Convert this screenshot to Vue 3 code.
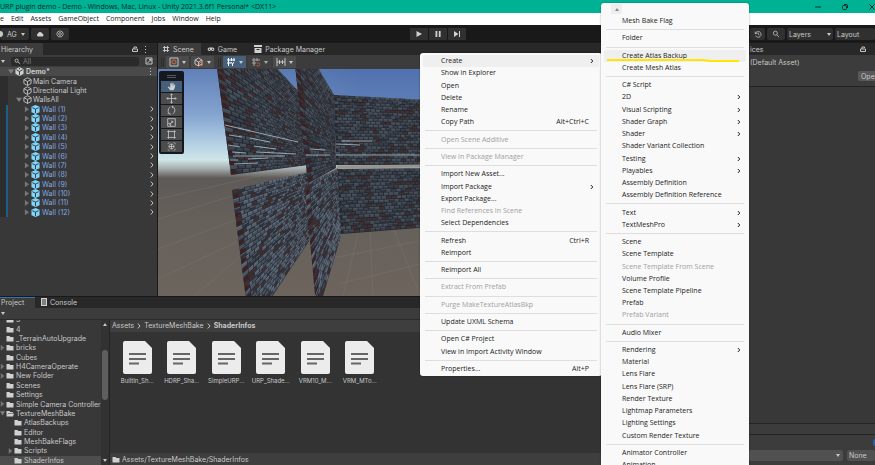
<script setup>
const menus = ['e', 'Edit', 'Assets', 'GameObject', 'Component', 'Jobs', 'Window', 'Help']

const hierarchy = [
  { name: 'Demo*', kind: 'scene', depth: 0, open: true },
  { name: 'Main Camera', kind: 'object', depth: 1 },
  { name: 'Directional Light', kind: 'object', depth: 1 },
  { name: 'WallsAll', kind: 'object', depth: 1, open: true },
  ...Array.from({ length: 12 }, (_, i) => ({ name: `Wall (${i + 1})`, kind: 'prefab', depth: 2, closed: true })),
]

const folders = [
  { name: '3', depth: 0 },
  { name: '4', depth: 0 },
  { name: '_TerrainAutoUpgrade', depth: 0 },
  { name: 'bricks', depth: 0, closed: true },
  { name: 'Cubes', depth: 0 },
  { name: 'H4CameraOperate', depth: 0, closed: true },
  { name: 'New Folder', depth: 0, closed: true },
  { name: 'Scenes', depth: 0 },
  { name: 'Settings', depth: 0 },
  { name: 'Simple Camera Controller', depth: 0, closed: true },
  { name: 'TextureMeshBake', depth: 0, open: true },
  { name: 'AtlasBackups', depth: 1 },
  { name: 'Editor', depth: 1 },
  { name: 'MeshBakeFlags', depth: 1 },
  { name: 'Scripts', depth: 1, closed: true },
  { name: 'ShaderInfos', depth: 1, selected: true },
]

const assets = ['BuiltIn_Sh...', 'HDRP_Sha...', 'SimpleURP...', 'URP_Shade...', 'VRM10_M...', 'VRM_MTo...']

const sep = { sep: true }
const item = (label, extra = {}) => ({ label, ...extra })
const off = { off: true }
const sub = { sub: true }

const contextMenu = [
  item('Create', { sub: true, hot: true }), item('Show in Explorer'), item('Open'), item('Delete'), item('Rename'),
  item('Copy Path', { key: 'Alt+Ctrl+C' }), sep,
  item('Open Scene Additive', off), sep,
  item('View in Package Manager', off), sep,
  item('Import New Asset...'), item('Import Package', sub), item('Export Package...'),
  item('Find References In Scene', off), item('Select Dependencies'), sep,
  item('Refresh', { key: 'Ctrl+R' }), item('Reimport'), sep,
  item('Reimport All'), sep,
  item('Extract From Prefab', off), sep,
  item('Purge MakeTextureAtlasBkp', off), sep,
  item('Update UXML Schema'), sep,
  item('Open C# Project'), item('View in Import Activity Window'), sep,
  item('Properties...', { key: 'Alt+P' }),
]

const createMenu = [
  item('Mesh Bake Flag'), sep,
  item('Folder'), sep,
  item('Create Atlas Backup', { hot: true }), item('Create Mesh Atlas'), sep,
  item('C# Script'), item('2D', sub), item('Visual Scripting', sub), item('Shader Graph', sub), item('Shader', sub),
  item('Shader Variant Collection'), item('Testing', sub), item('Playables', sub),
  item('Assembly Definition'), item('Assembly Definition Reference'), sep,
  item('Text', sub), item('TextMeshPro', sub), sep,
  item('Scene'), item('Scene Template'), item('Scene Template From Scene', off), item('Volume Profile'),
  item('Scene Template Pipeline'), item('Prefab'), item('Prefab Variant', off), sep,
  item('Audio Mixer'), sep,
  item('Rendering', sub), item('Material'), item('Lens Flare'), item('Lens Flare (SRP)'), item('Render Texture'),
  item('Lightmap Parameters'), item('Lighting Settings'), item('Custom Render Texture'), sep,
  item('Animator Controller'), item('Animation'),
]

// Brick walls: each is a quad (top-left, top-right, bottom-right, bottom-left)
// divided in perspective, with bricks grouped into one path per tone.
const walls = [
  { q: [[176, 26], [400, 38], [400, 96], [178, 96]], rows: 22, cols: 50, tone: 0, end: 0 },
  { q: [[178, 100], [400, 98], [400, 148], [183, 165]], rows: 18, cols: 50, tone: 0, end: 0 },
  { q: [[49, -77], [150, 33], [150, 96], [73, 106]], rows: 38, cols: 24, tone: 0, end: 0.03 },
  { q: [[74, 121], [151, 103], [151, 172], [92, 261]], rows: 30, cols: 22, tone: 1, end: 0.04 },
  { q: [[132, -49], [176, 26], [178, 99], [150, 114]], rows: 34, cols: 15, tone: 0, end: 0.08 },
  { q: [[147, 117], [180, 99], [183, 167], [159, 247]], rows: 26, cols: 13, tone: 1, end: 0.08 },
].map((w) => {
  const dist = (a, b) => Math.hypot(a[0] - b[0], a[1] - b[1])
  const [a, b, c, d] = w.q
  const near = 1 / dist(a, d)
  const far = 1 / dist(b, c)
  const at = (u, v) => {
    const t = (u * far) / ((1 - u) * near + u * far)
    const x = (a[0] * (1 - v) + d[0] * v) * (1 - t) + (b[0] * (1 - v) + c[0] * v) * t
    const y = (a[1] * (1 - v) + d[1] * v) * (1 - t) + (b[1] * (1 - v) + c[1] * v) * t
    return `${x.toFixed(1)} ${y.toFixed(1)}`
  }
  const quad = (u0, v0, u1, v1) => `M${at(u0, v0)}L${at(u1, v0)}L${at(u1, v1)}L${at(u0, v1)}Z`
  const tones = ['', '', '', '']
  let glints = ''
  let ends = ''
  let seed = 7
  const random = () => (seed = (seed * 16807) % 2147483647) / 2147483647
  for (let r = 0; r < w.rows; r++) {
    const v0 = (r + 0.1) / w.rows
    const v1 = (r + 0.8) / w.rows
    for (let i = 0; i < w.cols; i++) {
      const u0 = (i + (r % 2) * 0.5) / (w.cols + 0.5)
      const u1 = u0 + 0.85 / (w.cols + 0.5)
      const k = random()
      const n = k < 0.2 ? 0 : k < 0.6 ? 1 : k < 0.85 ? 2 : 3
      tones[n] += quad(u0, v0, u1, v1)
      if (k > 0.35) glints += `M${at(u0, v0)}L${at(u1, v0)}`
    }
    if (w.end && r % 2) ends += quad(0, v0, w.end, v1)
  }
  return { outline: w.q.map((p) => p.join(',')).join(' '), tones, glints, ends, tone: w.tone }
})

const tools = [
  'M5 11 2 7l1-.6L5 8V3l1-.3L6.500 6V2h1v4L8 2.500l1 .2V6.500L10 4l1 .3-.8 4.200L9 11Z',
  'M6.500 1v11M1 6.500h11M5 2.500 6.500 1 8 2.500M5 10.500 6.500 12 8 10.500M2.500 5 1 6.500 2.500 8M10.500 5 12 6.500 10.500 8',
  'M5 2.500Q2 4 2.500 7.500T6 11M2 9.500l1.500 1.500M8 10.500q3-1.500 2.500-5T7 2M8.500 1 7 2l1.500 1.500',
  'M2 2h9v9H2ZM4 9l4-4M6 5h2v2M2 7.500h3.500V11',
  'M3 1.500v10M10 1.500v10M1.500 3h10M1.500 10h10',
  'M6.500 3.500a3 3 0 1 0 .01 0M2 3l2-1M9 1.500l2.500 2M2 10l2 1.500M9 11.500l2.500-2M6.500 3.500v6M3.500 6.500h6',
]
</script>

<template>
  <div class="app">
    <header class="titlebar">
      <span class="title">URP plugin demo - Demo - Windows, Mac, Linux - Unity 2021.3.6f1 Personal* &lt;DX11&gt;</span>
      <div class="window-buttons">
        <button aria-label="Minimize"><svg viewBox="0 0 8 8"><path d="M1 4h6" /></svg></button>
        <button aria-label="Restore"><svg viewBox="0 0 8 8"><rect x="1.500" y="2.500" width="4" height="4" rx="1" /><path d="M3 1.500h2.500q1 0 1 1V5" /></svg></button>
        <button aria-label="Close"><svg viewBox="0 0 8 8"><path d="m1.500 1.500 5 5m0-5-5 5" /></svg></button>
      </div>
    </header>

    <nav class="menubar">
      <button v-for="m in menus" :key="m">{{ m }}</button>
    </nav>

    <div class="toolbar">
      <div class="group">
        <button class="account"><i class="dot"></i>AG<i class="down"></i></button>
        <button class="tool" aria-label="Cloud"><svg viewBox="0 0 10 8"><path class="fill" d="M2.500 7A2 2 0 0 1 2.500 3.300 2.800 2.800 0 0 1 7.800 3.500 1.800 1.800 0 0 1 8 7Z" /></svg></button>
        <button class="tool" aria-label="Settings"><svg viewBox="0 0 10 10"><path d="M5 1 8.200 2.500 9 5.500 7 8.500H3L1 5.500 1.800 2.500Z" /><circle cx="5" cy="5" r="1.700" /></svg></button>
      </div>
      <div class="play">
        <button aria-label="Play"><svg viewBox="0 0 8 8"><path class="fill" d="M1.500 1 7 4 1.500 7Z" /></svg></button>
        <button aria-label="Pause"><svg viewBox="0 0 8 8"><path class="fill" d="M1.500 1h1.800v6H1.500ZM4.800 1h1.800v6H4.800Z" /></svg></button>
        <button aria-label="Step"><svg viewBox="0 0 8 8"><path class="fill" d="M1 1 5.500 4 1 7ZM6 1h1v6H6Z" /></svg></button>
      </div>
      <div class="group right">
        <button class="history" aria-label="History"><svg viewBox="0 0 10 10"><path d="M1.500 2v2.500H4M1.800 4.500A3.600 3.600 0 1 1 2 7M5.200 3v2.300l1.600 1" /></svg></button>
        <button class="tool" aria-label="Search"><svg viewBox="0 0 10 10"><circle cx="4.200" cy="4" r="2.500" /><path d="m6 6 3 3" /></svg></button>
        <button class="drop">Layers<i class="down"></i></button>
        <button class="drop layout">Layout</button>
      </div>
    </div>

    <div class="workspace">
      <div class="main">
        <div class="upper">
          <section class="hierarchy">
            <div class="tabs">
              <button class="tab on first">Hierarchy</button>
              <span class="tab-tools"><svg viewBox="0 0 8 8"><path d="M1.500 4h5v2.500h-5ZM3 4V2h2.500v1" /></svg><i class="dots"></i></span>
            </div>
            <div class="search">
              <i class="down"></i>
              <label class="field"><svg viewBox="0 0 8 8"><circle cx="3" cy="3" r="1.800" /><path d="m4.500 4.500 2.500 2" /></svg><input type="text" placeholder="All" aria-label="Search hierarchy" /></label>
              <svg class="expand" viewBox="0 0 8 8"><path d="M1 1h6v6H1ZM2.500 6 6 2.500M4 2.500h2v2" /></svg>
            </div>
            <ul class="rows">
              <li v-for="h in hierarchy" :key="h.name" :class="['depth' + h.depth, h.kind]">
                <span class="gutter"></span>
                <i class="twist" :class="{ open: h.open, closed: h.closed }"></i>
                <svg v-if="h.kind === 'scene'" class="cube" viewBox="0 0 10 10"><path class="fill" d="M5 0 9.500 2.500v5L5 10 .5 7.500v-5Z" /><path class="ink" d="M5 5v4M5 5 1.500 3M5 5l3.500-2M5 1v1.500" /></svg>
                <svg v-else-if="h.kind === 'object'" class="cube" viewBox="0 0 10 10"><path d="M5 .8 9 3v4.200L5 9.400 1 7.200V3ZM1 3l4 2 4-2M5 5v4.400" /></svg>
                <svg v-else class="cube" viewBox="0 0 10 10"><path class="blue" d="M5 0 9.500 2v6L5 10 .5 8V2Z" /><path class="ink" d="M1.500 3 5 4.600 8.500 3M5 4.600V9" /></svg>
                <span class="name">{{ h.name }}</span>
                <i v-if="h.kind === 'scene'" class="dots"></i>
                <svg v-if="h.kind === 'prefab'" class="chev" viewBox="0 0 4 8"><path d="m.8 1.500 2.200 2.500L.8 6.500" /></svg>
              </li>
            </ul>
          </section>

          <section class="scene">
            <div class="tabs">
              <button class="tab on"><svg viewBox="0 0 8 8"><path d="M1 2.500h6M1 5.500h6M2.500 1v6M5.500 1v6" /></svg>Scene</button>
              <button class="tab"><svg viewBox="0 0 10 8"><path class="fill" d="M3 2h4a2 2 0 0 1 0 4.500Q6 6.500 5.500 5.500h-1Q4 6.500 3 6.500A2 2 0 0 1 3 2Z" /><circle class="hole" cx="3" cy="4.200" r=".9" /><circle class="hole" cx="7" cy="4.200" r=".9" /></svg>Game</button>
              <button class="tab pack"><svg viewBox="0 0 8 8"><path class="fill" d="M0 0h8v2H0ZM.5 3h7v5h-7Z" /><path class="ink" d="M2.500 4.500h3" /></svg>Package Manager</button>
            </div>
            <div class="scene-tools">
              <i class="grip"></i>
              <button aria-label="Pivot"><svg viewBox="0 0 10 10"><path d="M1 1h8v8H1Z" /><circle class="orange" cx="5" cy="5" r="2" /></svg><i class="down"></i></button>
              <button aria-label="Rotation"><svg viewBox="0 0 10 10"><path d="M4.500 1 8 3v4L4.500 9 1 7V3ZM1 3l3.500 2L8 3M4.500 5v4" /><circle class="orange" cx="7" cy="7" r="1.700" /></svg><i class="down"></i></button>
              <i class="grip gap"></i>
              <button class="active" aria-label="Grid"><svg viewBox="0 0 10 10"><path d="M2.500 1v8M5.500 1v3M1 3h8M1 6h4M8 1v3M5 5l1.500 2L8 5M6.500 7v2" /></svg><i class="down"></i></button>
              <button class="dim" aria-label="Snap"><svg viewBox="0 0 10 10"><path d="M3 1v8M6 1v3M1 3h8M1 6h4" /><path class="orange" d="M5.500 6h2a1.300 1.300 0 0 1 0 2.800h-2" /></svg><i class="down"></i></button>
              <button aria-label="Increment"><svg viewBox="0 0 10 10"><path d="M1 1v8M9 1v8M3.500 3v4M6.500 3v4M1 5h8" /></svg><i class="down"></i></button>
            </div>
            <div class="viewport">
              <svg class="world" viewBox="0 0 591 227" preserveAspectRatio="xMinYMin slice">
                <defs>
                  <linearGradient id="sky" x1="0" y1="0" x2="0" y2="1">
                    <stop offset="0" stop-color="#6080b8" /><stop offset=".2" stop-color="#84a3cf" /><stop offset=".32" stop-color="#b0cde2" />
                    <stop offset=".4" stop-color="#cfe6e8" /><stop offset=".44" stop-color="#a4abab" /><stop offset=".48" stop-color="#5e5a57" />
                    <stop offset=".7" stop-color="#67615b" /><stop offset="1" stop-color="#6c645d" />
                  </linearGradient>
                  <linearGradient id="haze" x1="0" y1="0" x2="1" y2="0">
                    <stop offset="0" stop-color="#4668a8" stop-opacity="0" /><stop offset=".2" stop-color="#4466a6" stop-opacity=".55" />
                  </linearGradient>
                </defs>
                <rect width="760" height="227" fill="url(#sky)" />
                <rect x="60" width="700" height="60" fill="url(#haze)" />
                <path class="ground" d="M0 130 110 105M0 150 90 122M36 227 82 188M0 180 80 150M0 210 85 170M185 227 200 165M215 227 212 160M262 227 235 158M180 215 262 195M170 190 262 172" />
                <g v-for="(w, i) in walls" :key="i" :class="'wall tone' + w.tone">
                  <polygon class="base" :points="w.outline" />
                  <path v-for="(d, n) in w.tones" :key="n" :class="'brick' + n" :d="d" />
                  <path class="glint" :d="w.glints" />
                  <path class="ends" :d="w.ends" />
                </g>
                <path class="strip" d="M179 98 262 97" />
                <path class="streaks" d="M67 56 140 73M71 66 84 68M92 69l20 4M70 76l12 2M96 77l22 3M74 83l14 1M98 83l40 2M72 91l8 0M90 90l20-1M148 86h24M178 86h84M75 87h52M76 95l24-1M184 72h30M178 75l24 1M152 80l15 1" />
              </svg>
              <div class="palette">
                <i class="handle"></i>
                <button v-for="(t, n) in tools" :key="n" :class="{ active: n === 0 }" :aria-label="'Tool ' + (n + 1)"><svg viewBox="0 0 13 13"><path :class="{ fill: n === 0 }" :d="t" /></svg></button>
              </div>
            </div>
          </section>
        </div>

        <section class="project">
          <div class="tabs">
            <button class="tab on first">Project</button>
            <button class="tab console"><svg viewBox="0 0 8 8"><path class="fill" d="M1 0h6v8H1Z" /><path class="ink" d="M2 2h4M2 4h4M2 6h4" /></svg>Console</button>
          </div>
          <div class="bar"><i class="down"></i></div>
          <div class="split">
            <div class="tree">
              <ul class="rows">
                <li v-for="f in folders" :key="f.name" :class="['depth' + f.depth, { selected: f.selected }]">
                  <i class="twist" :class="{ open: f.open, closed: f.closed }"></i>
                  <svg class="folder" viewBox="0 0 8 7"><path v-if="!f.open" class="fill" d="M.5 1h3l.8 1h3.200v4.500h-7Z" /><path v-else class="fill" d="M.5 6.500V1h3l.8 1h2.500v1H2.300L1.300 5.500 2.500 3.500H8L7 6.500Z" /></svg>
                  <span class="name">{{ f.name }}</span>
                </li>
              </ul>
            </div>
            <div class="scroll"><i class="up"></i><span class="thumb"></span><i class="down"></i></div>
            <div class="browser">
              <div class="crumbs">
                <span>Assets</span><svg viewBox="0 0 4 8"><path d="m.8 1.500 2.200 2.500L.8 6.500" /></svg>
                <span>TextureMeshBake</span><svg viewBox="0 0 4 8"><path d="m.8 1.500 2.200 2.500L.8 6.500" /></svg>
                <b>ShaderInfos</b>
              </div>
              <div class="assets">
                <figure v-for="a in assets" :key="a">
                  <svg viewBox="0 0 29 33"><path class="paper" d="M2 0h20l7 7v24q0 2-2 2H2q-2 0-2-2V2Q0 0 2 0Z" /><path class="lines" d="M6 13h17M6 18h17M6 22.500h10" /></svg>
                  <figcaption>{{ a }}</figcaption>
                </figure>
              </div>
              <footer class="path"><svg class="folder" viewBox="0 0 8 7"><path class="fill" d="M.5 1h3l.8 1h3.200v4.500h-7Z" /></svg>Assets/TextureMeshBake/ShaderInfos</footer>
            </div>
          </div>
        </section>
      </div>

      <aside class="inspector">
        <div class="tabs"><button class="tab">ices</button><span class="tab-tools"><svg viewBox="0 0 8 8"><path d="M1.500 4h5v2.500h-5ZM3 4V2h2.500v1" /></svg></span></div>
        <div class="asset-head"><span>(Default Asset)</span><button>Open</button></div>
        <div class="empty"></div>
        <div class="preview"></div>
        <div class="labels">
          <i class="badge"></i>
          <div class="bundle"><button class="wide" aria-label="Asset bundle"><i class="down"></i></button><button class="none">None</button></div>
        </div>
      </aside>
    </div>

    <ul class="menu context">
      <li v-for="(m, i) in contextMenu" :key="i" :class="m.sep ? 'sep' : 'entry'">
        <button v-if="!m.sep" :class="{ hot: m.hot }" :disabled="m.off"><span>{{ m.label }}</span><span v-if="m.key" class="key">{{ m.key }}</span><svg v-if="m.sub" viewBox="0 0 4 8"><path d="m.8 2 2 2-2 2" /></svg></button>
      </li>
    </ul>

    <div class="menu create">
      <span class="scroll-up"><i class="up"></i></span>
      <ul>
        <li v-for="(m, i) in createMenu" :key="i" :class="m.sep ? 'sep' : 'entry'">
          <button v-if="!m.sep" :class="{ hot: m.hot }" :disabled="m.off"><span>{{ m.label }}</span><svg v-if="m.sub" viewBox="0 0 4 8"><path d="m.8 2 2 2-2 2" /></svg></button>
        </li>
      </ul>
      <svg class="marker" viewBox="0 0 134 4"><path d="M1 1h96q5 1 10 1h26" /></svg>
    </div>
  </div>
</template>

<style>
body { overflow: hidden; background: #191919; }
</style>

<style scoped>
* { box-sizing: border-box; }
.app { position: relative; display: flex; flex-direction: column; height: 100vh; min-height: 320px; overflow: hidden; font: 7px/9px Inter, "Liberation Sans", sans-serif; color: #c8c8c8; background: #191919; }
button { display: flex; align-items: center; margin: 0; padding: 0; border: 0; background: none; color: inherit; font: inherit; white-space: nowrap; }
ul { margin: 0; padding: 0; list-style: none; }
svg { flex: none; fill: none; stroke: #c4c4c4; stroke-width: 1; width: 8px; height: 8px; }
.fill { fill: #d0d0d0; stroke: none; }
.ink { stroke: #303030; }
.orange { stroke: #d0694a; }
.hole { fill: #282828; stroke: none; }
.down, .up { flex: none; width: 0; height: 0; border: 2px solid transparent; border-top: 3px solid #c8c8c8; border-bottom: 0; }
.up { border-top: 0; border-bottom: 3px solid #c8c8c8; }
.dots { width: 1px; height: 7px; background: repeating-linear-gradient(#c4c4c4 0 1px, transparent 1px 3px); }

.titlebar { display: flex; flex: none; justify-content: space-between; height: 13px; background: #00b294; color: #06281f; font: 7px/13px "Open Sans", sans-serif; }
.title { white-space: nowrap; }
.window-buttons { display: flex; gap: 19px; margin-right: -1px; }
.window-buttons svg { stroke: #0b2b24; }
.menubar { display: flex; flex: none; gap: 7px; height: 12px; background: #fff; color: #1b1b1b; font: 7px/12px "Open Sans", sans-serif; }

.toolbar { display: grid; flex: none; grid-template-columns: 1fr auto 1fr; align-items: center; height: 18px; }
.group { display: flex; gap: 2px; }
.group button, .play button { height: 12px; background: #303030; }
.group button { justify-content: center; border-radius: 2px; }
.group .account { gap: 4px; padding: 0 4px 0 0; }
.dot { width: 3px; height: 6px; border-radius: 0 3px 3px 0; background: #c8c8c8; }
.tool { width: 18px; }
.play { display: flex; gap: 1px; }
.play button { justify-content: center; width: 18px; }
.right { justify-content: flex-end; }
.history { width: 15px; }
.group .drop { justify-content: space-between; width: 46px; padding: 0 2px; }
.group .layout { width: 40px; }

.workspace { display: flex; flex: 1; min-height: 0; }
.main { display: flex; flex: 1; flex-direction: column; min-width: 0; }
.upper { display: flex; flex: 3 1 0; gap: 1px; min-height: 0; }
.tabs { display: flex; flex: none; align-items: stretch; height: 12px; background: #282828; }
.tab { gap: 2px; padding: 0 6px 0 4px; }
.tab.on { background: #3c3c3c; }
.tab.first { padding-left: 1px; width: 43px; }
.tab-tools { display: flex; gap: 6px; align-items: center; margin-left: auto; padding-right: 8px; }

.hierarchy { width: 157px; background: #383838; overflow: hidden; }
.search { display: flex; align-items: center; gap: 6px; height: 12px; padding: 0 4px 0 1px; background: #3c3c3c; }
.field { display: flex; flex: 1; align-items: center; gap: 2px; height: 9px; padding-left: 3px; background: #2a2a2a; border-radius: 2px; }
.field svg { width: 7px; height: 7px; }
.field input { flex: 1; min-width: 0; padding: 0; border: 0; outline: 0; background: none; color: #ccc; font: inherit; }
.field input::placeholder { color: #7d7d7d; opacity: 1; }
.rows { display: grid; grid-auto-rows: 1fr; height: 150px; }
.rows li { display: flex; align-items: center; min-height: 0; white-space: nowrap; }
.hierarchy li { padding-right: 3px; }
.gutter { align-self: stretch; width: 8px; background: #2d2d2d; flex: none; }
.prefab .gutter { border-right: 2px solid #1d5f8a; }
.scene .gutter { background: none; }
.hierarchy .scene { background: #4a4a4a; font-weight: 700; }
.twist { flex: none; width: 6px; height: 6px; margin-right: 1px; }
.twist.open { background: #808080; clip-path: polygon(0 15%, 100% 15%, 50% 85%); }
.twist.closed { background: #757575; clip-path: polygon(15% 0, 85% 50%, 15% 100%); }
.hierarchy .depth1 .twist { margin-left: 8px; }
.hierarchy .depth2 .twist { margin-left: 16px; }
.cube { width: 9px; height: 9px; margin-right: 2px; }
.depth1 .cube { margin-right: 1px; }
.prefab .name { color: #80a8e0; }
.blue { fill: #7fd6fd; stroke: none; }
.name { flex: 1; }
.chev { width: 4px; }
.hierarchy .dots { margin-right: 3px; }

section.scene { display: flex; flex: 1; flex-direction: column; min-width: 0; }
.scene .tabs { gap: 2px; }
.scene .tab { gap: 3px; padding-right: 7px; }
.scene .pack { padding-left: 8px; }
.scene-tools { display: flex; flex: none; align-items: center; gap: 2px; height: 14px; padding-left: 3px; background: #3c3c3c; }
.scene-tools button { gap: 3px; height: 12px; padding: 0 3px; background: #4b4b4b; border-radius: 1px; }
.scene-tools .active, .palette .active { background: #46607c; }
.scene-tools .active svg { stroke: #fff; }
.scene-tools .dim { background: #414141; opacity: .8; }
.scene-tools svg { width: 10px; height: 10px; }
.grip { width: 3px; height: 9px; border: 1px solid #2d2d2d; border-width: 0 1px; }
.gap { margin-left: 2px; }
.viewport { position: relative; flex: 1; min-height: 0; overflow: hidden; background: #67615b; }
.world { display: block; width: 100%; height: 100%; stroke: none; }
.ground { fill: none; stroke: #7c756f; stroke-opacity: .45; stroke-width: 1; }
.base { fill: #25282f; }
.brick0 { fill: #422f32; }
.brick1 { fill: #373f4a; }
.brick2 { fill: #424c59; }
.brick3 { fill: #2e343e; }
.tone1 .brick1 { fill: #465160; }
.tone1 .brick2 { fill: #526071; }
.tone1 .base { fill: #2c2e34; }
.ends { fill: #3d2021; }
.glint { stroke: #6f777f; stroke-opacity: .4; stroke-width: 1; }
.tone1 .glint { stroke: #8595a6; stroke-opacity: .5; }
.strip { stroke: #96948f; stroke-width: 3; }
.streaks { stroke: #b4ced7; stroke-opacity: .75; stroke-width: 1; }
.palette { position: absolute; left: 1px; top: 2px; display: flex; flex-direction: column; gap: 1px; width: 25px; padding: 2px; background: #15191f; border-radius: 2px; }
.palette button { justify-content: center; height: 11px; background: #4c4c4c; }
.palette svg { width: 11px; height: 11px; }
.handle { align-self: center; width: 9px; height: 3px; margin: 2px; border: 1px solid #555; border-width: 1px 0; }

.project { display: flex; flex: 2 1 0; flex-direction: column; min-height: 0; border-top: 1px solid #191919; }
.project .tabs { height: 11px; }
.project .first { width: 35px; border-top: 1px solid #3a72b0; }
.console { padding-left: 5px; }
.bar { display: flex; flex: none; align-items: center; height: 12px; padding-left: 1px; background: #3c3c3c; border-bottom: 1px solid #2b2b2b; }
.split { display: flex; flex: 1; min-height: 0; }
.tree { display: flex; flex-direction: column; justify-content: flex-end; width: 101px; overflow: hidden; background: #383838; }
.tree .rows { flex: none; }
.tree .twist { width: 5px; margin-right: 1px; }
.tree .depth1 .twist { margin-left: 8px; }
.folder { width: 8px; height: 7px; margin-right: 2px; }
.selected { background: #4d4d4d; }
.scroll { display: flex; flex-direction: column; align-items: center; width: 9px; padding: 3px 0; background: #323232; border-right: 1px solid #242424; }
.thumb { width: 6px; height: 50px; margin: 24px 0 auto; border-radius: 3px; background: #5e5e5e; }
.browser { display: flex; flex: 1; flex-direction: column; min-width: 0; background: #333; }
.crumbs { display: flex; align-items: center; gap: 3px; height: 12px; padding-left: 2px; background: #3e3e3e; }
.crumbs svg { width: 4px; height: 8px; }
.assets { display: grid; grid-template-columns: repeat(6, 1fr); flex: 1; align-content: start; width: 267px; padding-top: 9px; margin-left: 5px; }
figure { display: flex; flex-direction: column; align-items: center; gap: 3px; margin: 0; }
figure svg { width: 29px; height: 33px; }
figcaption { font-size: 6px; line-height: 8px; white-space: nowrap; }
.paper { fill: #ececec; stroke: none; }
.lines { stroke: #666; stroke-width: 2; }
.path { display: flex; align-items: center; height: 12px; padding-left: 2px; background: #3e3e3e; }

.inspector { display: flex; flex: none; flex-direction: column; width: 126px; overflow: hidden; background: #383838; }
.inspector .tab { padding-left: 1px; }
.asset-head { display: flex; flex-direction: column; height: 32px; padding: 3px 0 0 1px; background: #3c3c3c; border-bottom: 1px solid #222; }
.asset-head button { align-self: flex-end; width: 17px; height: 10px; margin-top: 4px; padding-left: 3px; overflow: hidden; background: #585858; border-radius: 2px 0 0 2px; }
.empty { flex: 1; }
.preview { height: 12px; border: 1px solid #242424; border-width: 1px 0; background: #3c3c3c; }
.labels { display: flex; flex-direction: column; height: 30px; padding-top: 4px; background: #3c3c3c; }
.badge { align-self: flex-end; width: 2px; height: 7px; border-radius: 4px 0 0 4px; background: #2b5ea5; }
.bundle { display: flex; gap: 4px; margin-top: 4px; }
.bundle button { height: 11px; background: #515151; border-radius: 2px; }
.wide { flex: 1; justify-content: flex-end; padding-right: 3px; }
.bundle .none { width: 28px; padding-left: 2px; }

.menu { position: absolute; display: flex; flex-direction: column; background: #f9f9f9; color: #1b1b1b; font: 7px/10px "Open Sans", "Noto Sans", sans-serif; box-shadow: 0 0 2px #0006; }
.context { left: 420px; top: 53px; width: 182px; height: 323px; padding: 2px 3px 1px; border-radius: 3px; }
.create { left: 601px; top: 3px; width: 148px; height: 470px; padding: 1px 3px 2px; border-radius: 3px; }
.create ul { display: flex; flex-direction: column; height: 456px; }
.entry { display: flex; flex: 12 1 0; min-height: 0; }
.sep { display: flex; flex: 5 1 0; align-items: center; min-height: 0; }
.sep::before { content: ""; flex: 1; height: 1px; margin: 0 2px; background: #dedede; }
.entry button { flex: 1; justify-content: space-between; padding: 0 5px 0 18px; border-radius: 2px; }
.entry .hot { background: #efefef; }
.entry button:disabled { color: #a0a0a0; }
.entry svg { width: 4px; height: 8px; stroke: #222; }
.context .key { padding-right: 5px; }
.scroll-up { display: flex; flex: none; align-items: center; justify-content: center; width: 11px; height: 10px; margin: 0 0 1px 7px; background: #eee; }
.scroll-up .up { border-bottom-color: #888; }
.marker { position: absolute; left: 5px; top: 56px; width: 134px; height: 4px; stroke: #ffe500; stroke-width: 2; }
</style>
